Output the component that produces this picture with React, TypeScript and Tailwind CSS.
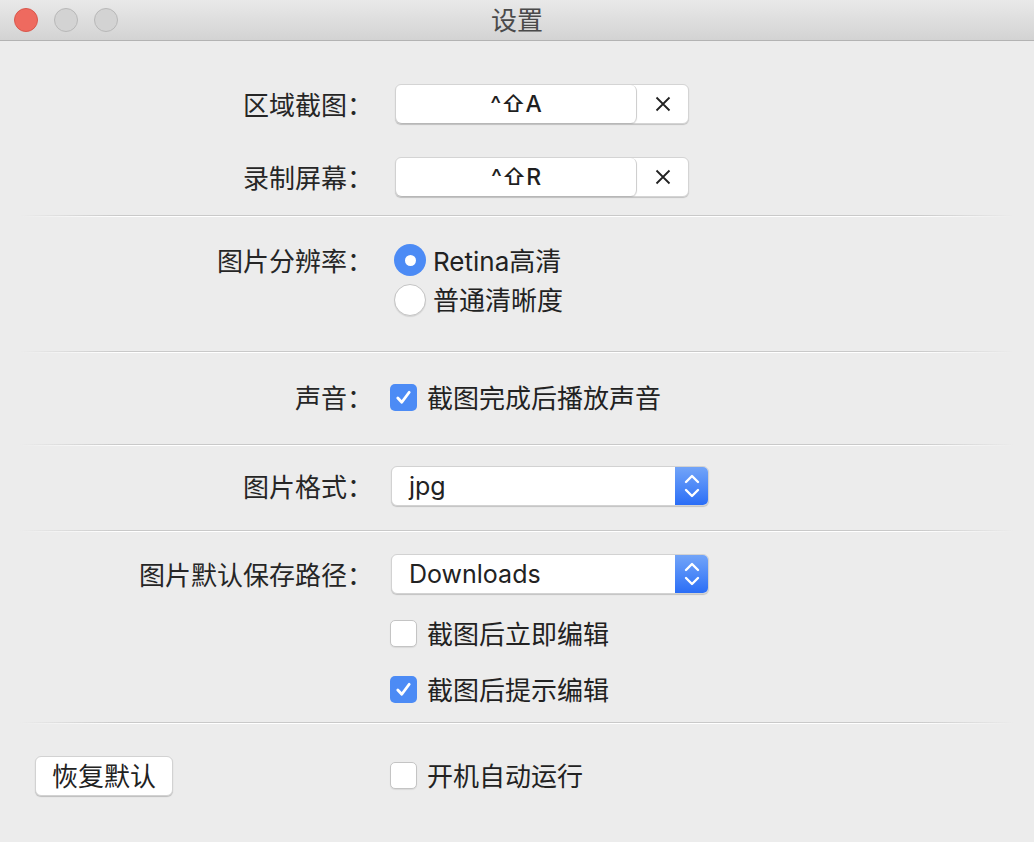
import React from 'react';

const FONT = { fontFamily: '"Inter", "Noto Sans CJK SC", "DejaVu Sans", sans-serif' };

/** Separador com as pontas esmaecidas, como no NSBox do macOS. */
const Sep: React.FC = () => (
  <div className="mx-[20px]">
    <div className="h-px bg-[linear-gradient(to_right,transparent,#c9c9c9_10%,#c9c9c9_90%,transparent)]" />
    <div className="h-px bg-[linear-gradient(to_right,transparent,#ffffff_10%,#ffffff_90%,transparent)]" />
  </div>
);

const Label: React.FC<{ children?: React.ReactNode }> = ({ children }) => (
  <div className="w-[373px] shrink-0 text-right text-[26px] text-[#262626] pt-[2px]">{children}</div>
);

const Check: React.FC<{ on?: boolean }> = ({ on }) =>
  on ? (
    <span className="w-[27px] h-[27px] rounded-[5px] bg-[#4c8bf5] flex items-center justify-center shrink-0">
      <svg width="19" height="19" viewBox="0 0 20 20" fill="none">
        <path d="M4 10.5 L8.2 15 L16 4.5" stroke="white" strokeWidth="3" strokeLinecap="round" strokeLinejoin="round" />
      </svg>
    </span>
  ) : (
    <span className="w-[27px] h-[27px] rounded-[5px] bg-white border border-[#c4c4c4] shadow-[0_1px_1px_rgba(0,0,0,0.08)] shrink-0" />
  );

const Radio: React.FC<{ on?: boolean }> = ({ on }) =>
  on ? (
    <span className="w-[32px] h-[32px] rounded-full bg-[#4c8bf5] flex items-center justify-center shrink-0">
      <span className="w-[11px] h-[11px] rounded-full bg-white" />
    </span>
  ) : (
    <span className="w-[32px] h-[32px] rounded-full bg-white border border-[#c4c4c4] shadow-[0_1px_1px_rgba(0,0,0,0.1)] shrink-0" />
  );

const Option: React.FC<{ children: React.ReactNode }> = ({ children }) => (
  <span className="pt-[2px]">{children}</span>
);

const Shortcut: React.FC<{ keys: string }> = ({ keys }) => (
  <div className="ml-[22px] flex h-[40px] w-[294px] rounded-[6px] bg-white border border-[#d4d4d4] shadow-[0_1px_1px_rgba(0,0,0,0.18)]">
    <div className="flex-1 flex items-center justify-center text-[23px] font-medium text-[#1f1f1f] border-r border-[#cfcfcf] rounded-[6px] shadow-[0_1px_1px_rgba(0,0,0,0.15)]">
      {keys}
    </div>
    <div className="w-[51px] flex items-center justify-center">
      <svg width="16" height="16" viewBox="0 0 16 16">
        <path d="M1.5 1.5 L14.5 14.5 M14.5 1.5 L1.5 14.5" stroke="#222" strokeWidth="1.8" />
      </svg>
    </div>
  </div>
);

const Select: React.FC<{ value: string }> = ({ value }) => (
  <div className="ml-[18px] flex h-[40px] w-[318px] rounded-[6px] bg-white border border-[#d2d2d2] shadow-[0_1px_1px_rgba(0,0,0,0.18)] overflow-hidden">
    <div className="flex-1 flex items-center pl-[17px] text-[25px] text-[#222] pt-[2px]">{value}</div>
    <div className="w-[33px] flex items-center justify-center bg-linear-to-b from-[#72a4f8] to-[#2a6df6]">
      <svg width="18" height="30" viewBox="0 0 18 30" fill="none">
        <path d="M3 11 L9 5 L15 11" stroke="white" strokeWidth="2.4" strokeLinecap="round" strokeLinejoin="round" />
        <path d="M3 19 L9 25 L15 19" stroke="white" strokeWidth="2.4" strokeLinecap="round" strokeLinejoin="round" />
      </svg>
    </div>
  </div>
);

const Light: React.FC<{ cls: string }> = ({ cls }) => (
  <span className={`w-[24px] h-[24px] rounded-full border ${cls}`} />
);

export default function App() {
  return (
    <div className="w-[1034px] h-[842px] bg-[#ececec] overflow-hidden" style={FONT}>
      {/* Barra de título */}
      <div className="relative h-[41px] bg-linear-to-b from-[#e9e9e9] to-[#d3d3d3] border-b border-[#b3b3b3] flex items-center justify-center">
        <div className="absolute left-[14px] top-[8px] flex gap-[16px]">
          <Light cls="bg-[#ee6a5f] border-[#d9574c]" />
          <Light cls="bg-[#d3d3d3] border-[#b8b8b8]" />
          <Light cls="bg-[#d3d3d3] border-[#b8b8b8]" />
        </div>
        <span className="text-[26px] text-[#4a4a4a]">设置</span>
      </div>

      {/* Atalhos */}
      <div className="h-[174px] pt-[43px]">
        <div className="flex items-center h-[40px]">
          <Label>区域截图：</Label>
          <Shortcut keys="^⇧A" />
        </div>
        <div className="flex items-center h-[40px] mt-[33px]">
          <Label>录制屏幕：</Label>
          <Shortcut keys="^⇧R" />
        </div>
      </div>
      <Sep />

      {/* Resolução */}
      <div className="h-[134px] pt-[23px]">
        <div className="flex items-center h-[40px]">
          <Label>图片分辨率：</Label>
          <div className="ml-[21px] flex items-center gap-[7px] text-[26px] text-[#222]">
            <Radio on />
            <Option>Retina高清</Option>
          </div>
        </div>
        <div className="flex items-center h-[39px]">
          <Label />
          <div className="ml-[21px] flex items-center gap-[7px] text-[26px] text-[#222]">
            <Radio />
            <Option>普通清晰度</Option>
          </div>
        </div>
      </div>
      <Sep />

      {/* Som */}
      <div className="h-[91px] pt-[24px]">
        <div className="flex items-center h-[40px]">
          <Label>声音：</Label>
          <div className="ml-[17px] flex items-center gap-[10px] text-[26px] text-[#222]">
            <Check on />
            <Option>截图完成后播放声音</Option>
          </div>
        </div>
      </div>
      <Sep />

      {/* Formato */}
      <div className="h-[84px] pt-[20px]">
        <div className="flex items-center h-[40px]">
          <Label>图片格式：</Label>
          <Select value="jpg" />
        </div>
      </div>
      <Sep />

      {/* Caminho */}
      <div className="h-[190px] pt-[22px]">
        <div className="flex items-center h-[40px]">
          <Label>图片默认保存路径：</Label>
          <Select value="Downloads" />
        </div>
        <div className="flex items-center h-[40px] mt-[19px]">
          <Label />
          <div className="ml-[17px] flex items-center gap-[10px] text-[26px] text-[#222]">
            <Check />
            <Option>截图后立即编辑</Option>
          </div>
        </div>
        <div className="flex items-center h-[40px] mt-[16px]">
          <Label />
          <div className="ml-[17px] flex items-center gap-[10px] text-[26px] text-[#222]">
            <Check on />
            <Option>截图后提示编辑</Option>
          </div>
        </div>
      </div>
      <Sep />

      {/* Rodapé */}
      <div className="flex items-center pt-[31px]">
        <button className="ml-[35px] w-[138px] h-[40px] rounded-[6px] bg-white border border-[#d2d2d2] shadow-[0_1px_1px_rgba(0,0,0,0.2)] text-[26px] text-[#222] flex items-center justify-center pt-[2px]">
          恢复默认
        </button>
        <div className="ml-[217px] flex items-center gap-[10px] text-[26px] text-[#222]">
          <Check />
          <Option>开机自动运行</Option>
        </div>
      </div>
    </div>
  );
}
